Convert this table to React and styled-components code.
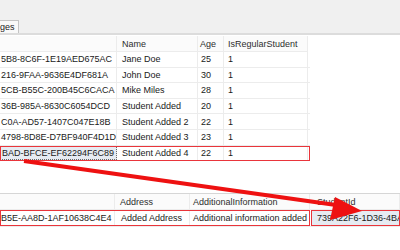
import React from "react";
import styled, { createGlobalStyle } from "styled-components";

// two result grids from a query window, with a red annotation linking the rows

const GlobalStyle = createGlobalStyle`
  body {
    margin: 0;
    background: #ffffff;
    font-family: "Liberation Sans", Arial, sans-serif;
    font-size: 9px;
    color: #1a1a1a;
  }
`;

const Page = styled.div`
  position: relative;
  width: 400px;
  height: 250px;
  overflow: hidden;
  background: #ffffff;
`;

const TabStrip = styled.div`
  height: 33px;
  background: #f0f0f0;
  display: flex;
  align-items: flex-end;
  border-bottom: 2px solid #dcdcdc;
`;

const Tab = styled.div`
  height: 12px;
  padding: 0 3px 0 0;
  line-height: 12px;
  background: #f9f9f9;
  border: 1px solid #c4c4c4;
  border-left: none;
  border-bottom: none;
  color: #222;
`;

const Grid = styled.div`
  display: flex;
  flex-direction: column;
  margin-top: ${(p) => p.$top || 0}px;
  border-top: ${(p) => (p.$ruled ? "1px solid #d6d6d6" : "none")};
`;

const Row = styled.div`
  display: grid;
  grid-template-columns: ${(p) => p.$cols};
  height: ${(p) => (p.$head ? 16 : 15.6)}px;
  box-sizing: border-box;
  width: ${(p) => p.$width}px;
  background: ${(p) => (p.$head ? "#fbfbfb" : "#ffffff")};
  border-bottom: 1px solid #ececec;
  outline: ${(p) => (p.$marked ? "1.6px solid #e9353b" : "none")};
  outline-offset: -1px;
`;

// the lower data row: three marked cells, then the marked key cell
const SplitRow = styled.div`
  display: flex;
  height: 17px;
  width: 400px;
  box-sizing: border-box;
  border-bottom: 1px solid #ececec;
`;

const MarkedGroup = styled.div`
  display: grid;
  grid-template-columns: ${(p) => p.$cols};
  width: ${(p) => p.$width}px;
  flex: none;
  outline: 1.6px solid #e9353b;
  outline-offset: -1px;
`;

const Cell = styled.div`
  box-sizing: border-box;
  padding-left: ${(p) => p.$pad ?? 4}px;
  border-right: 1px solid #ececec;
  white-space: nowrap;
  overflow: hidden;
  display: flex;
  align-items: center;
  flex: ${(p) => (p.$grow ? 1 : "none")};
  margin-left: ${(p) => p.$gap || 0}px;
  color: ${(p) => (p.$head ? "#2e2e2e" : "#1a1a1a")};
  background: ${(p) => (p.$selected ? "#e6ebf2" : "transparent")};
  border: ${(p) => (p.$focus ? "1px dotted #6a6a6a" : undefined)};
  outline: ${(p) => (p.$marked ? "1.6px solid #e9353b" : "none")};
  outline-offset: -1px;
`;

const Arrow = styled.svg`
  position: absolute;
  left: 0;
  top: 0;
  pointer-events: none;
`;

const upperCols = "117px 81px 26px 84px";
const lowerCols = "115px 75px 120px 1fr";

const students = [
  ["5B8-8C6F-1E19AED675AC", "Jane Doe", "25", "1"],
  ["216-9FAA-9636E4DF681A", "John Doe", "30", "1"],
  ["5CB-B55C-200B45C6CACA", "Mike Miles", "28", "1"],
  ["36B-985A-8630C6054DCD", "Student Added", "20", "1"],
  ["C0A-AD57-1407C047E18B", "Student Added 2", "22", "1"],
  ["4798-8D8E-D7BF940F4D1D", "Student Added 3", "23", "1"],
  ["BAD-BFCE-EF62294F6C89", "Student Added 4", "22", "1"],
];

const App = () => {
  return (
    <Page>
      <GlobalStyle />
      <TabStrip>
        <Tab>ges</Tab>
      </TabStrip>

      <Grid $top={1}>
        <Row $head $cols={upperCols} $width={308}>
          <Cell $head />
          <Cell $head $pad={5}>Name</Cell>
          <Cell $head $pad={2}>Age</Cell>
          <Cell $head>IsRegularStudent</Cell>
        </Row>
        {students.map((s, i) => {
          const last = i === students.length - 1;
          return (
            <Row key={s[0]} $cols={upperCols} $width={310} $marked={last}>
              <Cell $pad={1} $selected={last} $focus={last}>
                {s[0]}
              </Cell>
              <Cell $pad={5}>{s[1]}</Cell>
              <Cell $pad={3}>{s[2]}</Cell>
              <Cell>{s[3]}</Cell>
            </Row>
          );
        })}
      </Grid>

      <Grid $top={32} $ruled>
        <Row $head $cols={lowerCols} $width={400}>
          <Cell $head />
          <Cell $head $pad={5}>Address</Cell>
          <Cell $head $pad={3}>AdditionalInformation</Cell>
          <Cell $head $pad={7}>StudentId</Cell>
        </Row>
        <SplitRow>
          <MarkedGroup $cols="115px 75px 120px" $width={310}>
            <Cell $pad={1}>B5E-AA8D-1AF10638C4E4</Cell>
            <Cell $pad={6}>Added Address</Cell>
            <Cell $pad={3}>Additional information added</Cell>
          </MarkedGroup>
          <Cell $grow $gap={1} $pad={6} $selected $marked>
            739A22F6-1D36-4BA6-9C1E-3F0D2A7B5E11
          </Cell>
        </SplitRow>
      </Grid>

      <Arrow width="400" height="250" viewBox="0 0 400 250">
        <line x1="24" y1="161" x2="336" y2="205" stroke="#ee1111" strokeWidth="4" />
        <polygon points="362,211 330,220 335,197" fill="#ee1111" />
      </Arrow>
    </Page>
  );
};

export default App;
